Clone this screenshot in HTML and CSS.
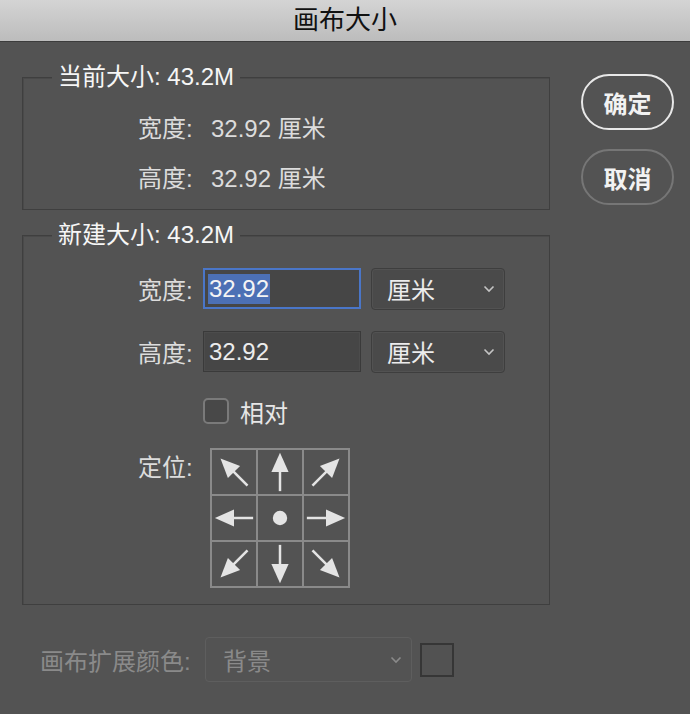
FILE: index.html
```html
<!DOCTYPE html>
<html lang="zh">
<head>
<meta charset="utf-8">
<link rel="stylesheet" href="styles.css">
</head>
<body>
<div class="window">
  <div class="titlebar">画布大小</div>
  <div class="content">
    <div class="left">
      <section class="group group-current">
        <div class="legend">当前大小: 43.2M</div>
        <div class="group-body body-current">
          <div class="info-row"><span class="info-label">宽度:</span><span class="info-value">32.92 厘米</span></div>
          <div class="info-row"><span class="info-label">高度:</span><span class="info-value">32.92 厘米</span></div>
        </div>
      </section>
      <section class="group group-new">
        <div class="legend">新建大小: 43.2M</div>
        <div class="group-body body-new">
          <div class="field-row">
            <span class="field-label">宽度:</span>
            <div class="text-input focused"><span class="selected">32.92</span></div>
            <div class="select"><span>厘米</span><svg class="chev" viewBox="0 0 12 8"><path d="M1.5 1.5 L6 6 L10.5 1.5" /></svg></div>
          </div>
          <div class="field-row row-gap">
            <span class="field-label">高度:</span>
            <div class="text-input"><span>32.92</span></div>
            <div class="select"><span>厘米</span><svg class="chev" viewBox="0 0 12 8"><path d="M1.5 1.5 L6 6 L10.5 1.5" /></svg></div>
          </div>
          <div class="check-row">
            <span class="checkbox"></span><span class="check-label">相对</span>
          </div>
          <div class="anchor-row">
            <span class="field-label anchor-label">定位:</span>
            <div class="anchor-grid">
              <div class="cell"><svg viewBox="0 0 46 46"><g transform="rotate(-135 23 23)"><use href="#arr"/></g></svg></div>
              <div class="cell"><svg viewBox="0 0 46 46"><g transform="rotate(-90 23 23)"><use href="#arr"/></g></svg></div>
              <div class="cell"><svg viewBox="0 0 46 46"><g transform="rotate(-45 23 23)"><use href="#arr"/></g></svg></div>
              <div class="cell"><svg viewBox="0 0 46 46"><g transform="rotate(180 23 23)"><use href="#arr"/></g></svg></div>
              <div class="cell"><svg viewBox="0 0 46 46"><circle cx="23" cy="23" r="7.5" fill="#e4e4e4"/></svg></div>
              <div class="cell"><svg viewBox="0 0 46 46"><use href="#arr"/></svg></div>
              <div class="cell"><svg viewBox="0 0 46 46"><g transform="rotate(135 23 23)"><use href="#arr"/></g></svg></div>
              <div class="cell"><svg viewBox="0 0 46 46"><g transform="rotate(90 23 23)"><use href="#arr"/></g></svg></div>
              <div class="cell"><svg viewBox="0 0 46 46"><g transform="rotate(45 23 23)"><use href="#arr"/></g></svg></div>
            </div>
          </div>
        </div>
      </section>
      <div class="ext-row">
        <span class="ext-label">画布扩展颜色:</span>
        <div class="select ext-select"><span>背景</span><svg class="chev" viewBox="0 0 12 8"><path d="M1.5 1.5 L6 6 L10.5 1.5" /></svg></div>
        <span class="swatch"></span>
      </div>
    </div>
    <div class="right">
      <div class="btn btn-primary">确定</div>
      <div class="btn btn-secondary">取消</div>
    </div>
  </div>
</div>
<svg width="0" height="0" class="defs">
  <defs>
    <g id="arr">
      <line x1="3" y1="23" x2="27" y2="23" stroke="#e4e4e4" stroke-width="2.6"/>
      <polygon points="23,14 43,23 23,32" fill="#e4e4e4"/>
    </g>
  </defs>
</svg>
</body>
</html>
```

FILE: styles.css
```css
html, body {
  margin: 0;
  padding: 0;
}
body {
  width: 690px;
  height: 714px;
  overflow: hidden;
  background: #535353;
  font-family: "Liberation Sans", "Noto Sans CJK SC", sans-serif;
  font-size: 24px;
  color: #e6e6e6;
}
.defs {
  position: absolute;
  width: 0;
  height: 0;
}
.window {
  width: 690px;
  height: 714px;
  display: flex;
  flex-direction: column;
}
.titlebar {
  height: 41px;
  line-height: 41px;
  text-align: center;
  font-size: 26px;
  color: #111;
  background: linear-gradient(#d4d4d4, #bcbcbc);
  border-bottom: 1px solid #3c3c3c;
}
.content {
  display: flex;
  padding: 35px 0 0 22px;
}
.left {
  width: 528px;
  display: flex;
  flex-direction: column;
}
.group {
  box-sizing: border-box;
  border: 1px solid #3f3f3f;
  box-shadow: inset 1px 1px 0 #4a4a4a;
  display: flex;
  flex-direction: column;
}
.legend {
  align-self: flex-start;
  margin: -13px 0 0 29px;
  padding: 0 6px;
  background: #535353;
  line-height: 24px;
  color: #f6f6f6;
}
.group-body {
  padding-left: 115px;
}
.group-current {
  height: 133px;
}
.body-current {
  padding-top: 12px;
}
.info-row {
  height: 50px;
  display: flex;
  align-items: center;
  color: #dcdcdc;
}
.info-label {
  width: 73px;
}
.group-new {
  margin-top: 25px;
  height: 370px;
}
.body-new {
  padding-top: 21px;
}
.field-row {
  display: flex;
  align-items: center;
  height: 41px;
}
.row-gap {
  margin-top: 22px;
}
.field-label {
  width: 65px;
  color: #dcdcdc;
}
.text-input {
  box-sizing: border-box;
  width: 158px;
  height: 41px;
  background: #464646;
  border: 1px solid #3a3a3a;
  box-shadow: inset 0 0 0 1px #4c4c4c;
  display: flex;
  align-items: center;
  padding-left: 5px;
  color: #ececec;
}
.text-input.focused {
  border: 2px solid #4a76c8;
  box-shadow: none;
  padding-left: 3px;
}
.selected {
  background: #4c70b5;
  color: #f4f4f4;
  padding: 1px 1px;
  line-height: 28px;
}
.select {
  box-sizing: border-box;
  margin-left: 10px;
  width: 134px;
  height: 42px;
  border: 1px solid #3e3e3e;
  border-radius: 4px;
  background: #4a4a4a;
  box-shadow: inset 0 0 0 1px #525252;
  display: flex;
  align-items: center;
  justify-content: space-between;
  padding: 0 9px 0 15px;
  color: #ececec;
}
.chev {
  width: 12px;
  height: 8px;
  fill: none;
  stroke: #c4c4c4;
  stroke-width: 1.6;
}
.check-row {
  margin-top: 26px;
  margin-left: 65px;
  display: flex;
  align-items: center;
  height: 26px;
}
.checkbox {
  box-sizing: border-box;
  width: 26px;
  height: 26px;
  border: 2px solid #7a7a7a;
  border-radius: 5px;
  background: #484848;
}
.check-label {
  margin-left: 11px;
  color: #e6e6e6;
}
.anchor-row {
  margin-top: 24px;
  display: flex;
  align-items: flex-start;
}
.anchor-label {
  line-height: 40px;
}
.anchor-grid {
  margin-left: 7px;
  display: grid;
  grid-template-columns: repeat(3, 44px);
  grid-template-rows: repeat(3, 44px);
  gap: 2px;
  padding: 2px;
  background: #8a8a8a;
  width: max-content;
}
.cell {
  background: #535353;
}
.cell svg {
  display: block;
  width: 44px;
  height: 44px;
}
.ext-row {
  margin-top: 32px;
  display: flex;
  align-items: center;
  padding-left: 18px;
}
.ext-label {
  width: 165px;
  color: #8a8a8a;
}
.ext-select {
  margin-left: 0;
  width: 207px;
  height: 45px;
  border-color: #5e5e5e;
  background: #535353;
  box-shadow: none;
  color: #8a8a8a;
  padding-left: 17px;
}
.ext-select .chev {
  stroke: #8a8a8a;
}
.swatch {
  box-sizing: border-box;
  margin-left: 8px;
  width: 34px;
  height: 34px;
  border: 2px solid #363636;
  background: #525252;
}
.right {
  margin-left: 31px;
  display: flex;
  flex-direction: column;
  gap: 19px;
  margin-top: -3px;
}
.btn {
  box-sizing: border-box;
  width: 93px;
  height: 56px;
  border-radius: 28px;
  display: flex;
  align-items: center;
  justify-content: center;
  font-weight: bold;
  color: #f2f2f2;
}
.btn-primary {
  border: 2px solid #e8e8e8;
}
.btn-secondary {
  border: 2px solid #767676;
}
```
